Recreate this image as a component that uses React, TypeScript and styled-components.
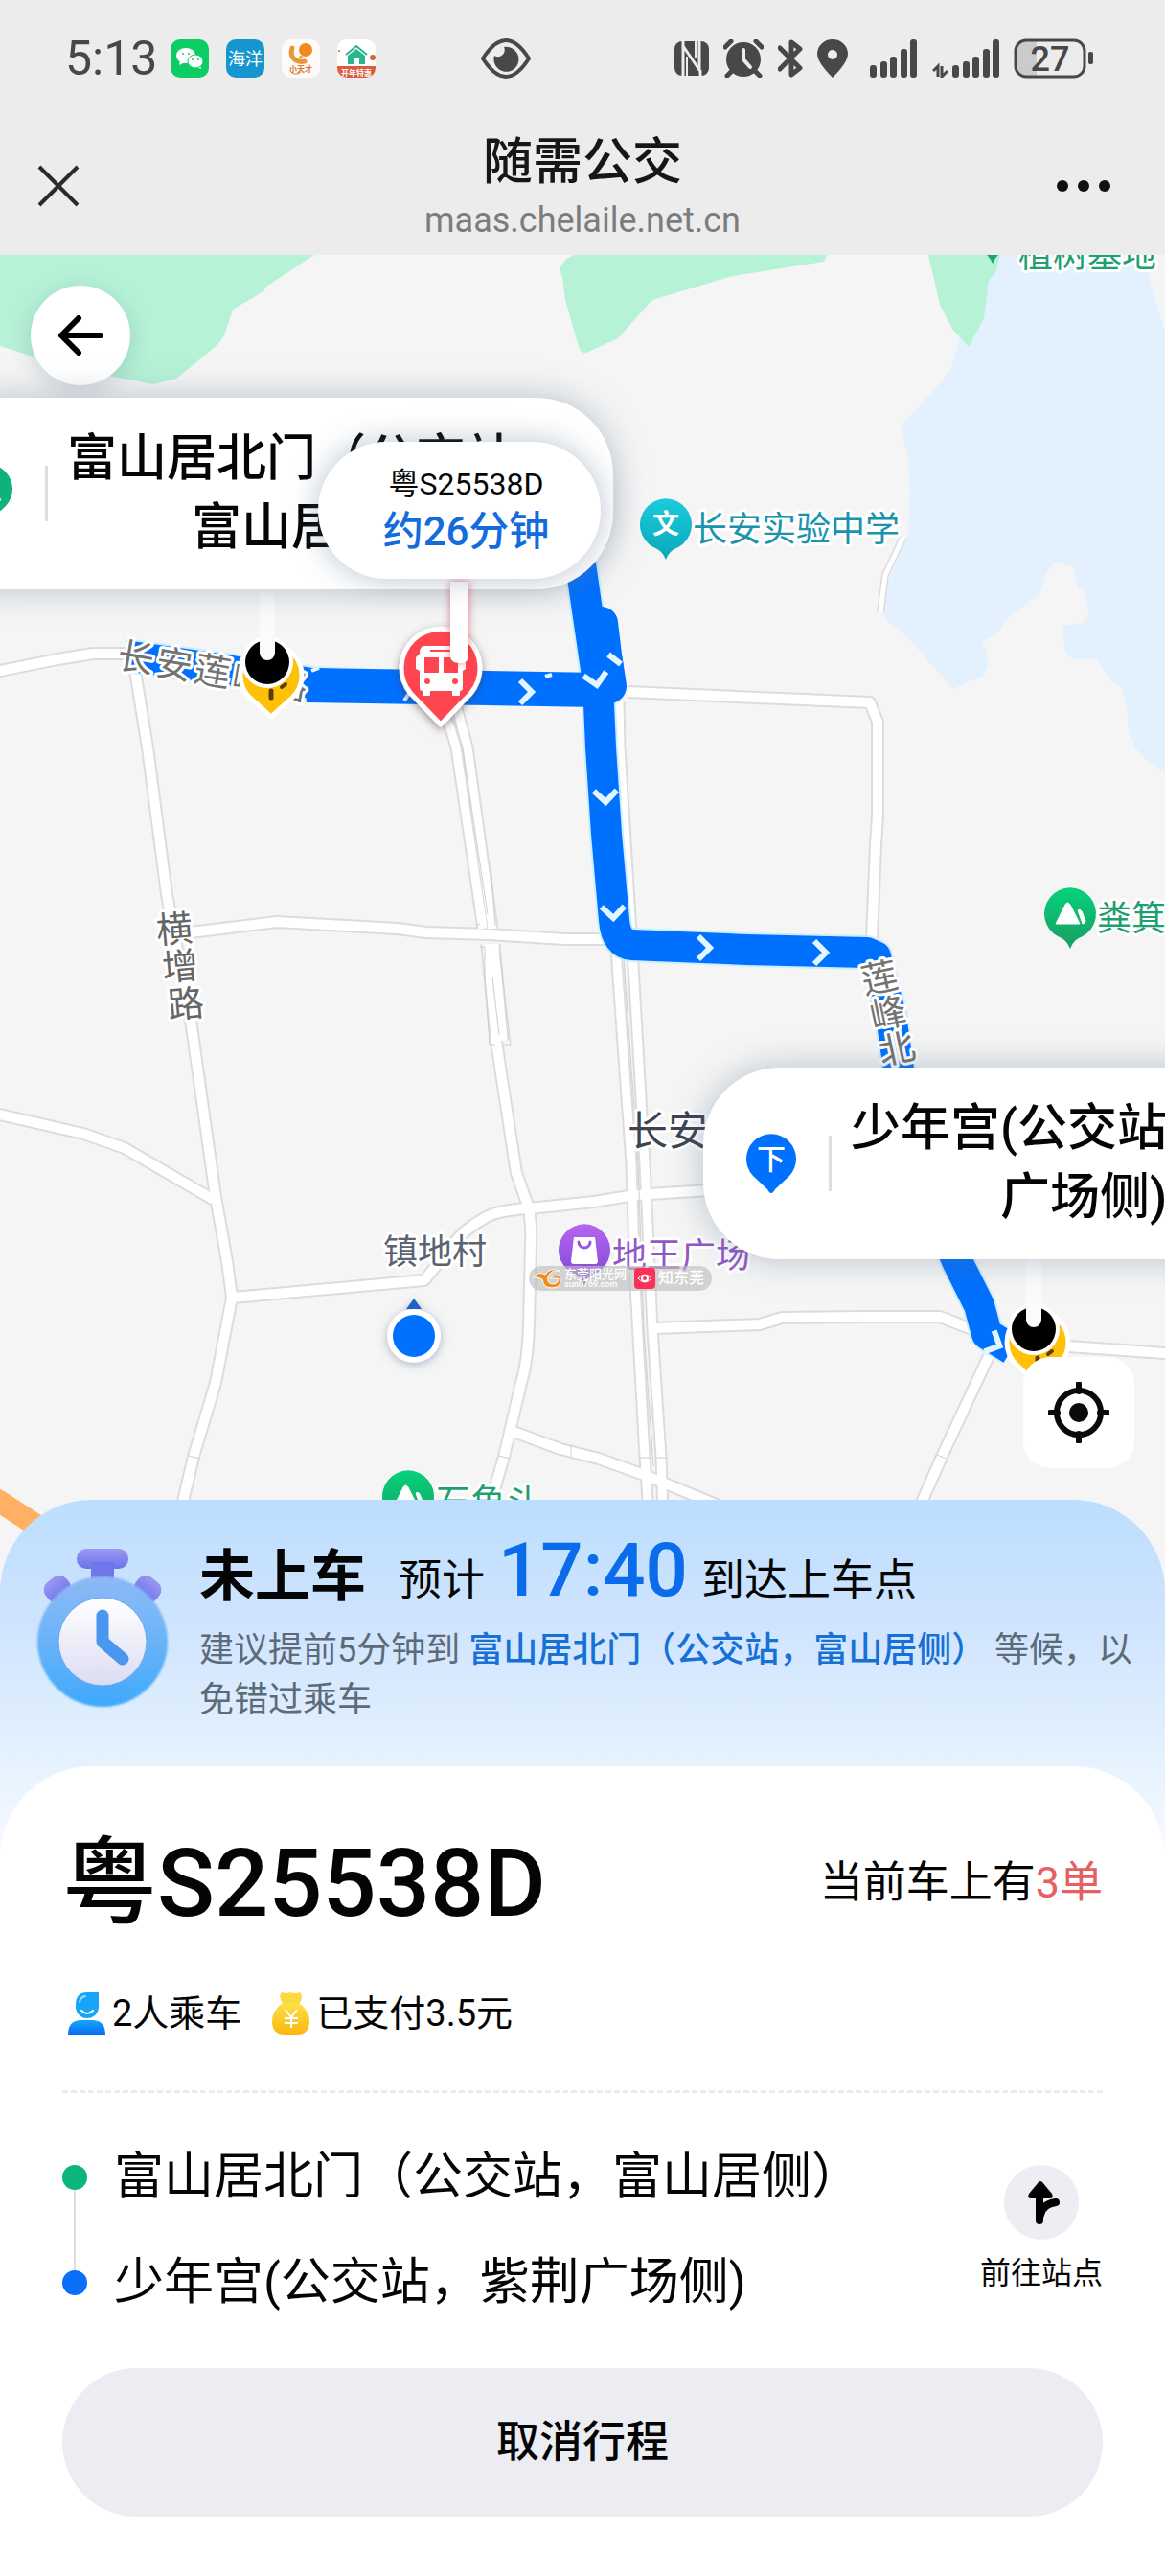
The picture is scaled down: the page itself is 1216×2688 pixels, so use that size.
import React from "react";
import styled, { createGlobalStyle } from "styled-components";

const GlobalStyle = createGlobalStyle`
  * { box-sizing: border-box; }
  body {
    margin: 0;
    background: #fff;
    color: #050505;
    font-family: Roboto, "Noto Sans CJK SC", sans-serif;
  }
  button { font: inherit; color: inherit; border: 0; padding: 0; cursor: pointer; }
  h1, h2, p, ol { margin: 0; padding: 0; font-weight: 400; }
`;

const Page = styled.main`
  display: flex;
  flex-direction: column;
  min-height: 100vh;
  overflow: hidden;
`;

/* ---------- top bars ---------- */

const Header = styled.header`
  background: #ececec;
  height: 266px;
`;

const StatusBar = styled.div`
  display: flex;
  align-items: center;
  gap: 110px;
  height: 122px;
  padding: 0 74px 0 68px;
  color: #484848;
`;

const StatusGroup = styled.div<{ $gap: number; $end?: boolean }>`
  display: flex;
  align-items: center;
  flex: none;
  gap: ${(p) => p.$gap}px;
  margin-left: ${(p) => (p.$end ? "auto" : "0")};
`;

const SignalGroup = styled.div`
  display: flex;
  align-items: center;
  gap: 16px;
  padding-left: 8px;
`;

const Clock = styled.span`
  width: 92px;
  font-size: 50px;
  line-height: 60px;
`;

const AppIcon = styled.svg`
  width: 40px;
  height: 40px;
  flex: none;
`;

const Glyph = styled.svg`
  display: block;
  flex: none;
`;

const TitleBar = styled.div`
  display: grid;
  grid-template-columns: 170px 1fr 170px;
  align-items: center;
  height: 144px;
`;

const BarButton = styled.button<{ $width: number }>`
  display: grid;
  place-items: center;
  width: ${(p) => p.$width}px;
  height: 100px;
  background: none;
`;

const TitleText = styled.div`
  padding-top: 8px;
  text-align: center;
`;

const Title = styled.h1`
  font-size: 52px;
  line-height: 64px;
  font-weight: 500;
  color: #161616;
`;

const Host = styled.p`
  font-size: 36px;
  line-height: 56px;
  color: #7c7c7c;
`;

/* ---------- map ---------- */

const MapArea = styled.section`
  position: relative;
  overflow: hidden;
  height: 1400px;
  background: #f5f5f5;
`;

const MapCanvas = styled.svg`
  display: block;
  width: 100%;
  height: 100%;
`;

const BackButton = styled.button`
  position: absolute;
  left: 32px;
  top: 32px;
  width: 104px;
  height: 104px;
  display: grid;
  place-items: center;
  border-radius: 50%;
  background: #fff;
  box-shadow: 0 6px 24px rgba(60, 90, 120, 0.22);
`;

const LocateButton = styled.button`
  position: absolute;
  right: 32px;
  top: 1150px;
  width: 116px;
  height: 116px;
  display: grid;
  place-items: center;
  border-radius: 28px;
  background: #fff;
`;

const Callout = styled.div<{ $left: number; $top: number }>`
  position: absolute;
  left: ${(p) => p.$left}px;
  top: ${(p) => p.$top}px;
  display: flex;
  align-items: center;
  padding: 28px 50px 28px 45px;
  border-radius: 80px;
  background: #fff;
  box-shadow: 0 0 36px rgba(90, 115, 140, 0.4);
  white-space: nowrap;
`;

const CalloutRule = styled.span`
  width: 3px;
  height: 58px;
  margin: 0 20px 0 34px;
  background: #ddd;
`;

const CalloutText = styled.p`
  font-size: 52px;
  line-height: 72px;
  font-weight: 500;
  text-align: center;
`;

const Vehicle = styled.div`
  position: absolute;
  left: 332px;
  top: 195px;
  width: 295px;
`;

const VehicleBubble = styled.div`
  position: relative;
  display: flex;
  flex-direction: column;
  justify-content: center;
  align-items: center;
  height: 143px;
  padding-left: 14px;
  border-radius: 72px;
  background: #fff;
  box-shadow: 0 0 32px rgba(90, 115, 140, 0.42);
`;

const VehiclePlate = styled.span`
  font-size: 32px;
  line-height: 44px;
`;

const VehicleEta = styled.span`
  font-size: 42px;
  line-height: 56px;
  font-weight: 500;
  color: #146bdb;
`;

const Watermark = styled.div`
  position: absolute;
  left: 552px;
  top: 1055px;
  display: flex;
  align-items: center;
  gap: 3px;
  height: 26px;
  padding: 0 8px 0 4px;
  border-radius: 13px;
  background: rgba(190, 190, 190, 0.65);
  color: #fff;
`;

const WatermarkText = styled.span<{ $size: number }>`
  font-size: ${(p) => p.$size}px;
  line-height: ${(p) => p.$size}px;
  font-weight: 500;
`;

const WatermarkStack = styled.span`
  display: flex;
  flex-direction: column;
  width: 70px;
`;

/* ---------- bottom sheet ---------- */

const Sheet = styled.section`
  position: relative;
  flex: 1;
  display: flex;
  flex-direction: column;
  margin-top: -101px;
  border-radius: 96px 96px 0 0;
  background: linear-gradient(#bcdefe 0px, #cfe4fe 130px, #e3f1fe 260px, #f2f8ff 340px, #fff 400px);
`;

const StatusRow = styled.div`
  display: flex;
  align-items: flex-start;
  gap: 24px;
  height: 278px;
  padding: 32px 24px 0 32px;
`;

const StatusBody = styled.div`
  flex: 1;
`;

const Headline = styled.h2`
  display: flex;
  align-items: baseline;
  font-size: 45px;
  line-height: 84px;
`;

const State = styled.strong`
  margin-right: 34px;
  font-size: 58px;
  font-weight: 700;
`;

const ArriveTime = styled.span`
  margin: 0 14px;
  font-size: 78px;
  font-weight: 500;
  color: #0a6cea;
`;

const Advice = styled.p`
  margin-top: 4px;
  font-size: 36px;
  line-height: 52px;
  color: #5d6a78;

  em {
    font-style: normal;
    font-weight: 500;
    color: #1670d6;
  }
`;

const Card = styled.div`
  flex: 1;
  display: flex;
  flex-direction: column;
  padding: 54px 65px 64px;
  border-radius: 96px 96px 0 0;
  background: #fff;
`;

const PlateRow = styled.div`
  display: flex;
  align-items: center;
  justify-content: space-between;
  height: 136px;
`;

const Plate = styled.h2`
  font-size: 99px;
  line-height: 136px;
  font-weight: 500;
`;

const Orders = styled.p`
  font-size: 45px;
  line-height: 64px;
`;

const OrderCount = styled.span`
  color: #e5605f;
`;

const Facts = styled.div`
  display: flex;
  gap: 30px;
  height: 148px;
  padding: 40px 0 0 4px;
`;

const Fact = styled.span`
  display: flex;
  align-items: center;
  gap: 4px;
  height: 56px;
  font-size: 38px;
  line-height: 56px;
`;

const Trip = styled.div`
  display: flex;
  justify-content: space-between;
  padding: 33px 0 34px;
  border-top: 3px dashed #ebebeb;
`;

const Stops = styled.ol`
  list-style: none;
`;

const Stop = styled.li<{ $color: string; $linked?: boolean }>`
  position: relative;
  display: flex;
  align-items: center;
  gap: 28px;
  height: 110px;
  font-size: 52px;
  line-height: 72px;

  &::before {
    content: "";
    width: 26px;
    height: 26px;
    border-radius: 50%;
    background: ${(p) => p.$color};
  }

  &::after {
    content: "";
    display: ${(p) => (p.$linked ? "block" : "none")};
    position: absolute;
    left: 12px;
    top: 68px;
    width: 2px;
    height: 84px;
    background: #ddd;
  }
`;

const NavButton = styled.button`
  display: flex;
  flex-direction: column;
  align-items: center;
  gap: 13px;
  padding-top: 42px;
  align-self: flex-start;
  background: none;
  font-size: 32px;
  line-height: 44px;
`;

const NavDisc = styled.span`
  display: grid;
  place-items: center;
  width: 78px;
  height: 78px;
  border-radius: 50%;
  background: #eceef3;
`;

const CancelButton = styled.button`
  height: 155px;
  margin-top: auto;
  border-radius: 78px;
  background: #ebedf3;
  font-size: 45px;
  line-height: 64px;
  font-weight: 500;
`;

/* ---------- drawings ---------- */

const ROADS = [
  "M-10 702L0 700 60 688 97 682 135 682",
  "M141 700L154 780 166 872 174 933 200 1071 225 1249 237 1316 242 1354 225 1443 202 1520 176 1630",
  "M190 974L289 962 415 969 445 973 510 975 590 980 640 980",
  "M-10 1162L0 1163 87 1183 130 1198 223 1252",
  "M242 1354L443 1336 459 1316Q480 1288 488 1283 500 1273 514 1267 530 1262 552 1261L620 1254 663 1247 740 1242",
  "M518 1086L523 1120 539 1224 552 1261Q555 1280 554 1300L552 1382Q551 1420 544 1443L526 1520 500 1610",
  "M536 1494L585 1512 625 1522 675 1540 760 1575",
  "M655 722L908 733 916 753 916 850 914 882 910 979",
  "M684 1386L793 1382 816 1375 899 1374 981 1374 1017 1388 1050 1400 1115 1405 1216 1412 1230 1412",
  "M1032 1415L983 1520 930 1640",
];

const DUAL_ROADS = [
  "M458 735L470 760 476 780 504 969",
  "M476 735L488 780 514 969",
  "M508 985L512 1030 518 1090",
  "M516 985L525 1086",
  "M643 990L650 1090 659 1214 663 1341 673 1520 677 1580",
  "M646 733L647 780 659 974 673 1214 681 1387 690 1520 692 1580",
];

const ROUTES = [
  "M130 684L230 698 325 713 420 717 625 720",
  "M604 575L613 637 624 712 627 780 633 870 641 960Q643 985 660 986L780 991 905 994 914 998 930 1060 950 1200 999 1316 1022 1362 1030 1392 1056 1408",
];

type LabelProps = {
  x: number;
  y: number;
  color: string;
  size?: number;
  rotate?: number;
  anchor?: "start" | "middle";
  children: string;
};

const MapLabel = ({ x, y, color, size = 36, rotate = 0, anchor = "start", children }: LabelProps) => (
  <text
    x={x}
    y={y}
    dy="0.37em"
    fontSize={size}
    fill={color}
    stroke="#fff"
    strokeWidth={6}
    strokeLinejoin="round"
    paintOrder="stroke"
    textAnchor={anchor}
    transform={rotate ? `rotate(${rotate} ${x} ${y})` : undefined}
  >
    {children}
  </text>
);

const PoiPin = ({ x, y, fill, children }: { x: number; y: number; fill: string; children?: React.ReactNode }) => (
  <g transform={`translate(${x} ${y})`}>
    <path d="M0 37C-4 28-7 27-13 24A27 27 0 1 1 13 24C7 27 4 28 0 37Z" fill={fill} />
    {children}
  </g>
);

const Mountain = () => (
  <path
    d="M-15 11L-5-9Q-3-13 0-9L10 11ZM8-3Q10-5 12-2L16 8Q16 11 13 11Z"
    fill="#fff"
    stroke="#fff"
    strokeWidth={1}
    strokeLinejoin="round"
  />
);

const Chevron = ({ x, y, turn = 0 }: { x: number; y: number; turn?: number }) => (
  <path
    d="M-6-12L6 0-6 12"
    fill="none"
    stroke="#e2f6ff"
    strokeWidth={6}
    transform={`translate(${x} ${y}) rotate(${turn})`}
  />
);

const StopMarker = ({ x, y, top }: { x: number; y: number; top: number }) => (
  <g>
    <path
      d={`M${x + 4} ${y + 57}L${x - 18} ${y + 37}A32 32 0 1 1 ${x + 26} ${y + 37}Z`}
      fill="#ffc107"
      stroke="#fff"
      strokeWidth={5}
      strokeLinejoin="round"
    />
    <path d={`M${x + 4} ${y + 30}v7`} stroke="#5a3d12" strokeWidth={5} strokeLinecap="round" />
    <path d={`M${x + 15} ${y + 26}l4-3`} stroke="#5a3d12" strokeWidth={4} strokeLinecap="round" />
    <circle cx={x} cy={y} r={27} fill="#fff" />
    <circle cx={x} cy={y} r={23} fill="#000" />
    <path d={`M${x - 8} ${top}h16V${y - 10}a8 8 0 0 1-16 0Z`} fill="#fbfbfc" />
  </g>
);

const CityMap = () => (
  <MapCanvas viewBox="0 266 1216 1400" preserveAspectRatio="xMidYMin slice" role="img" aria-label="地图">
    <defs>
      <linearGradient id="teal" x2="0" y2="1">
        <stop offset="0" stopColor="#1ccbdc" />
        <stop offset="1" stopColor="#08a9b9" />
      </linearGradient>
      <linearGradient id="green" x2="0" y2="1">
        <stop offset="0" stopColor="#05d27b" />
        <stop offset="1" stopColor="#1a9c62" />
      </linearGradient>
      <linearGradient id="purple" x2="0" y2="1">
        <stop offset="0" stopColor="#b565f0" />
        <stop offset="1" stopColor="#7b45d8" />
      </linearGradient>
      <filter id="soft" x="-50%" y="-50%" width="200%" height="200%">
        <feDropShadow dx="0" dy="2" stdDeviation="5" floodColor="#5a7390" floodOpacity="0.5" />
      </filter>
    </defs>
    <rect y="266" width="1216" height="1400" fill="#f5f5f5" />
    <g fill="#b6f2d6">
      <path d="M0 266H328L278 299 275 304 243 323 234 350 227 360 184 395 160 401 118 393 34 372 0 361Z" />
      <path d="M600 266L591 270 584 280 587 290 590 313 604 362Q606 369 612 368L645 353 679 315 684 312 765 288 860 273 863 266Z" />
    </g>
    <path
      fill="#e3f1fe"
      d="M1030 266H1197L1199 288 1216 348V806L1193 790 1185 780 1178 763 1176 737 1170 716 1162 712 1144 688H1123Q1114 686 1112 680L1108 653 1130 650 1137 642 1132 617 1125 613 1121 592 1100 586 1093 597 1085 620 1050 646 1040 662 1025 669 1030 680 1032 692 1026 705 995 719 969 690 948 665 925 647 922 637 926 610 948 557 950 513 948 480 942 452 941 443 977 405 993 383 1001 355 1005 330Z"
    />
    <path fill="#b6f2d6" d="M969 266L981 318 994 343 1011 362 1027 332 1032 293 1039 285 1044 266Z" />

    <g fill="none" strokeLinejoin="round">
      <g stroke="#dcdcde">
        {ROADS.map((d) => <path key={d} d={d} strokeWidth={14} />)}
        {DUAL_ROADS.map((d) => <path key={d} d={d} strokeWidth={13} />)}
        <path d="M943 560L924 600 919 639" strokeWidth={8} />
      </g>
      <g stroke="#fff">
        {ROADS.map((d) => <path key={d} d={d} strokeWidth={10} />)}
        {DUAL_ROADS.map((d) => <path key={d} d={d} strokeWidth={9} />)}
        <path d="M943 560L924 600 919 639" strokeWidth={5} />
      </g>
      <g stroke="#cfcfd2" strokeWidth={1}>
        <path d="M482 775L509 954M514 1020L521 1080M651 1000L666 1214 672 1387 682 1530M512 900l5 66M497 966l4-2M501 988l5 0 0 30 5 72h6M525 1090h8l-12-98" />
        <path d="M197 1519l11 3M521 1519l11 3M668 1521h11M684 1521h12M978 1518l10 4M596 1508v12" />
      </g>
      <path d="M-12 1560L0 1567 60 1606" stroke="#ffb062" strokeWidth={23} />
      <g stroke="#cdeeff">
        {ROUTES.map((d) => <path key={d} d={d} strokeWidth={36} />)}
      </g>
      <g stroke="#0070ff">
        {ROUTES.map((d) => <path key={d} d={d} strokeWidth={32} />)}
        <path d="M628 650L634 700" strokeWidth={34} strokeLinecap="round" />
        <path d="M632 690L636 716" strokeWidth={36} strokeLinecap="round" />
        <path d="M320 715L625 720" strokeWidth={36} />
      </g>
    </g>
    <Chevron x={549} y={722} />
    <Chevron x={735} y={989} />
    <Chevron x={856} y={994} />
    <Chevron x={622} y={709} turn={80} />
    <Chevron x={632} y={831} turn={88} />
    <Chevron x={640} y={952} turn={88} />
    <Chevron x={1038} y={1402} turn={25} />
    <path d="M635 683l13 10" stroke="#e2f6ff" strokeWidth={6} />
    <path d="M325 700l8-3M569 706l7-2M422 731l6-9" stroke="#e2f6ff" strokeWidth={4} />

    <g>
      {["长", "安", "莲", "峰", "路"].map((c, i) => (
        <MapLabel key={c} x={142 + i * 40} y={686 + i * 7} color="#737373" size={38} rotate={10} anchor="middle">
          {c}
        </MapLabel>
      ))}
      {["横", "增", "路"].map((c, i) => (
        <MapLabel key={c} x={182 + i * 6} y={969 + i * 39} color="#666" size={38} rotate={-5} anchor="middle">
          {c}
        </MapLabel>
      ))}
      {["莲", "峰", "北"].map((c, i) => (
        <MapLabel key={c} x={918 + i * 9} y={1020 + i * 37} color="#737373" size={38} rotate={-12} anchor="middle">
          {c}
        </MapLabel>
      ))}
      <MapLabel x={655} y={1179} color="#3d4350" size={42}>长安镇</MapLabel>
      <MapLabel x={400} y={1306} color="#5b6372">镇地村</MapLabel>
    </g>

    <PoiPin x={695} y={547} fill="url(#teal)">
      <text y={10} fontSize={28} fontWeight={700} fill="#fff" textAnchor="middle">文</text>
    </PoiPin>
    <MapLabel x={723} y={552} color="#1b93ac">长安实验中学</MapLabel>
    <PoiPin x={1117} y={953} fill="url(#green)"><Mountain /></PoiPin>
    <MapLabel x={1145} y={958} color="#1f9f72">粪箕笃</MapLabel>
    <PoiPin x={1036} y={238} fill="#1fa372" />
    <MapLabel x={1063} y={266} color="#1f9f72">植树基地</MapLabel>
    <PoiPin x={426} y={1561} fill="url(#green)"><Mountain /></PoiPin>
    <MapLabel x={455} y={1567} color="#1f9f72">石角斗</MapLabel>
    <PoiPin x={610} y={1304} fill="url(#purple)">
      <path d="M-11-13H11L14 12Q14 15 11 15H-11Q-14 15-14 12Z" fill="#fff" />
      <path d="M-6-8a6 6 0 0 0 12 0" fill="none" stroke="#9a55e6" strokeWidth={3} strokeLinecap="round" />
    </PoiPin>
    <MapLabel x={639} y={1310} color="#8f58c4">地王广场</MapLabel>

    <g filter="url(#soft)">
      <path d="M424 1366L432 1355 440 1366Z" fill="#1d63c8" />
      <circle cx="432" cy="1394" r="28" fill="#fff" />
    </g>
    <circle cx="432" cy="1394" r="22" fill="#0070ff" />

    <StopMarker x={279} y={691} top={619} />
    <StopMarker x={1079} y={1387} top={1315} />
  </MapCanvas>
);

const LetterPin = ({ color, children }: { color: string; children: string }) => (
  <Glyph width={52} height={62} viewBox="0 0 52 62">
    <path d="M26 62Q24 62 22 58L7 44A26 26 0 1 1 45 44L30 58Q28 62 26 62Z" fill={color} />
    <text x={26} y={37} fontSize={30} fontWeight={500} fill="#fff" textAnchor="middle">
      {children}
    </text>
  </Glyph>
);

const BusPin = () => (
  <Glyph width={295} height={166} viewBox="332 604 295 166">
    <defs>
      <filter id="busShadow" x="-50%" y="-50%" width="200%" height="200%">
        <feDropShadow dx="0" dy="3" stdDeviation="4" floodColor="#4a3a3a" floodOpacity="0.55" />
      </filter>
      <filter id="stemShadow" x="-100%" y="-20%" width="300%" height="140%">
        <feDropShadow dx="0" dy="0" stdDeviation="4" floodColor="#d03040" floodOpacity="0.6" />
      </filter>
    </defs>
    <path
      d="M460 756L429 724A41 41 0 1 1 491 724Z"
      fill="#ff454f"
      stroke="#fff"
      strokeWidth={5}
      strokeLinejoin="round"
      filter="url(#busShadow)"
    />
    <path
      fill="#fff"
      d="M443 674H477Q483 674 483 681L486 684V698L483 700V718Q483 721 480 721V726H472V721H449V726H441V721Q438 721 438 718V700L434 698V686L438 682Q438 674 443 674Z"
    />
    <path fill="#ff454f" d="M449 680h23v-2h-23zM443 686h15v16h-15zM463 686h15v16h-15z" />
    <circle cx="446" cy="711" r="3" fill="#ff454f" />
    <circle cx="475" cy="711" r="3" fill="#ff454f" />
    <path d="M470 607H489V684Q489 692 480 692 470 692 470 684Z" fill="#fff" filter="url(#stemShadow)" />
  </Glyph>
);

const Stopwatch = () => (
  <Glyph width={152} height={200} viewBox="32 1597 152 200" aria-hidden="true">
    <defs>
      <linearGradient id="ring" x2="0" y2="1">
        <stop offset="0" stopColor="#8fb8f6" />
        <stop offset="0.35" stopColor="#76b6f8" />
        <stop offset="1" stopColor="#3fa9fb" />
      </linearGradient>
      <linearGradient id="knob" x2="0" y2="1">
        <stop offset="0" stopColor="#9c97f3" />
        <stop offset="1" stopColor="#6a74ea" />
      </linearGradient>
      <linearGradient id="face" x2="0" y2="1">
        <stop offset="0" stopColor="#fff" />
        <stop offset="1" stopColor="#dcdcf3" />
      </linearGradient>
      <filter id="ringBlur"><feGaussianBlur stdDeviation="1" /></filter>
    </defs>
    <rect x="80" y="1616" width="54" height="21" rx="10" fill="url(#knob)" />
    <rect x="95" y="1630" width="24" height="20" fill="#6f76ea" />
    <rect x="46" y="1646" width="28" height="24" rx="10" fill="url(#knob)" transform="rotate(-38 60 1658)" />
    <rect x="140" y="1646" width="28" height="24" rx="10" fill="url(#knob)" transform="rotate(38 154 1658)" />
    <circle cx="107" cy="1713" r="68" fill="url(#ring)" filter="url(#ringBlur)" />
    <circle cx="107" cy="1713" r="46" fill="url(#face)" stroke="#6aa5ee" strokeWidth="1" />
    <path d="M107 1686V1713L128 1731" fill="none" stroke="#4a97f0" strokeWidth="13" strokeLinecap="round" strokeLinejoin="round" />
  </Glyph>
);

const PersonIcon = () => (
  <Glyph width={44} height={46} viewBox="0 0 44 46">
    <defs>
      <linearGradient id="person" x2="0" y2="1">
        <stop offset="0" stopColor="#12a8fb" />
        <stop offset="1" stopColor="#0a6cf5" />
      </linearGradient>
    </defs>
    <path d="M10 14Q10 1 22 1H34V16A12 12 0 0 1 10 16Z" fill="#16a5f8" />
    <path d="M16 20Q22 26 28 20" fill="none" stroke="#fff" strokeWidth="2" strokeLinecap="round" />
    <path d="M14 11Q15 6 20 5" fill="none" stroke="#9bdcff" strokeWidth="2" strokeLinecap="round" />
    <path d="M2 45Q2 30 16 30H27Q41 30 41 45Z" fill="url(#person)" />
  </Glyph>
);

const MoneyIcon = () => (
  <Glyph width={44} height={46} viewBox="0 0 44 46">
    <defs>
      <linearGradient id="money" x2="0" y2="1">
        <stop offset="0" stopColor="#fde04a" />
        <stop offset="1" stopColor="#fbb70d" />
      </linearGradient>
    </defs>
    <path d="M12 1Q17 3 21 1 26 3 31 1 35 6 31 12H13Q8 6 12 1Z" fill="#fcd93f" />
    <path d="M13 12H30Q41 20 41 31 41 45 28 45H15Q2 45 2 31 2 20 13 12Z" fill="url(#money)" />
    <path d="M16 19l6 8 6-8M22 27v11M15 28h14M15 33h14" fill="none" stroke="#fff" strokeWidth="2" />
  </Glyph>
);

const SIGNAL = [
  [0, 27],
  [11, 23],
  [21, 18],
  [32, 10],
  [42, 0],
];

const Signal = () => (
  <Glyph width={49} height={40} viewBox="0 0 49 40">
    {SIGNAL.map(([x, y]) => (
      <rect key={x} x={x} y={y} width="7" height={40 - y} rx="3" fill="#484848" />
    ))}
  </Glyph>
);

const StatusIcons = () => (
  <>
    <Glyph width={36} height={36} viewBox="0 0 36 36">
      <rect width="36" height="36" rx="8" fill="#484848" />
      <path d="M9 36V5L26 30V0M9 5V0M27 36V30" stroke="#ececec" strokeWidth="3" fill="none" />
      <path d="M13 16V36M22 0V17" stroke="#ececec" strokeWidth="2" />
    </Glyph>
    <Glyph width={42} height={40} viewBox="0 0 42 40">
      <circle cx="21" cy="21" r="18" fill="#484848" />
      <path d="M2 8L8 2M40 8L34 2M9 33l-5 5M33 33l5 5" stroke="#484848" strokeWidth="5" strokeLinecap="round" />
      <path d="M21 11V21L28 29" stroke="#ececec" strokeWidth="4" fill="none" strokeLinecap="round" />
    </Glyph>
    <Glyph width={26} height={40} viewBox="0 0 26 40">
      <path d="M2 9L23 30 14 37V3L23 10 2 31" fill="none" stroke="#484848" strokeWidth="5" strokeLinejoin="round" strokeLinecap="round" />
    </Glyph>
    <Glyph width={32} height={40} viewBox="0 0 32 40">
      <path fillRule="evenodd" d="M16 40Q0 24 0 15A16 15 0 0 1 32 15Q32 24 16 40ZM16 11a5 5 0 1 0 0 10 5 5 0 0 0 0-10Z" fill="#484848" />
    </Glyph>
  </>
);

const Battery = () => (
  <Glyph width={84} height={42} viewBox="0 0 84 42">
    <path d="M12 3H24V39H12Q3 39 3 30V12Q3 3 12 3Z" fill="#cbcbcb" />
    <rect x="2" y="2" width="72" height="38" rx="11" fill="none" stroke="#484848" strokeWidth="3" />
    <rect x="78" y="14" width="5" height="13" rx="2" fill="#484848" />
    <text x="38" y="34" fontSize="36" fontWeight="500" fill="#484848" textAnchor="middle">27</text>
  </Glyph>
);

const AppIcons = () => (
  <>
    <AppIcon viewBox="0 0 40 40">
      <rect width="40" height="40" rx="10" fill="#0ccd63" />
      <ellipse cx="16" cy="17" rx="10" ry="8" fill="#fff" />
      <path d="M10 22l-1 5 6-3zM31 27l1 4-5-2z" fill="#fff" />
      <ellipse cx="26" cy="23" rx="8" ry="7" fill="#fff" stroke="#0ccd63" strokeWidth="1" />
      <g fill="#0ccd63">
        <circle cx="13" cy="15" r="1" />
        <circle cx="19" cy="15" r="1" />
        <circle cx="23" cy="21" r="1" />
        <circle cx="29" cy="21" r="1" />
      </g>
    </AppIcon>
    <AppIcon viewBox="0 0 40 40">
      <rect width="40" height="40" rx="10" fill="#1596cf" />
      <text x="20" y="27" fontSize="18" fill="#fff" textAnchor="middle">海洋</text>
    </AppIcon>
    <AppIcon viewBox="0 0 40 40">
      <rect width="40" height="40" rx="10" fill="#fdfaf7" />
      <circle cx="25" cy="11" r="7" fill="#f08a1d" />
      <path d="M19 17l-1 3 5-2z" fill="#f08a1d" />
      <path d="M11 9C8 18 14 25 24 23" fill="none" stroke="#e8963a" strokeWidth="5" strokeLinecap="round" />
      <text x="20" y="34" fontSize="8" fontWeight="700" fill="#d9792b" textAnchor="middle">小天才</text>
      <path d="M9 33Q14 39 20 34" fill="none" stroke="#d9792b" strokeWidth="1" />
    </AppIcon>
    <AppIcon viewBox="0 0 40 40">
      <defs>
        <clipPath id="homeClip"><rect width="40" height="40" rx="10" /></clipPath>
      </defs>
      <g clipPath="url(#homeClip)">
        <rect width="40" height="40" fill="#fff" />
        <rect y="28" width="40" height="12" fill="#dd5b3c" />
        <path d="M9 16L20 7 31 16" fill="none" stroke="#2ab58c" strokeWidth="2" />
        <path d="M11 17L20 10 29 17V26H23V20H18V26H11Z" fill="#2ab58c" />
        <circle cx="37" cy="19" r="3" fill="#c96a3a" />
        <circle cx="2" cy="12" r="1" fill="#c96a3a" />
        <text x="20" y="38" fontSize="8" fontWeight="700" fill="#fff" textAnchor="middle">开年特惠</text>
      </g>
    </AppIcon>
  </>
);

export default function App() {
  return (
    <>
      <GlobalStyle />
      <Page>
        <Header>
          <StatusBar>
            <StatusGroup $gap={18}>
              <Clock>5:13</Clock>
              <AppIcons />
            </StatusGroup>
            <Glyph width={52} height={42} viewBox="0 0 52 42">
              <path d="M2 21Q26-17 50 21 26 59 2 21Z" fill="none" stroke="#484848" strokeWidth="4" strokeLinejoin="round" />
              <path d="M24 9A13 13 0 1 1 14 18 7 7 0 0 0 24 9Z" fill="#484848" />
            </Glyph>
            <StatusGroup $gap={15} $end>
              <StatusIcons />
              <SignalGroup>
                <Signal />
                <StatusGroup $gap={4}>
                  <Glyph width={17} height={40} viewBox="0 0 17 40">
                    <path d="M1 33L6 28V39M10 28V39L16 33" fill="none" stroke="#484848" strokeWidth="3" />
                  </Glyph>
                  <Signal />
                </StatusGroup>
              </SignalGroup>
              <Battery />
            </StatusGroup>
          </StatusBar>
          <TitleBar>
            <BarButton $width={122} aria-label="关闭">
              <Glyph width={44} height={44} viewBox="0 0 44 44">
                <path d="M2 2L42 42M42 2L2 42" stroke="#2a2a2a" strokeWidth="4" />
              </Glyph>
            </BarButton>
            <TitleText>
              <Title>随需公交</Title>
              <Host>maas.chelaile.net.cn</Host>
            </TitleText>
            <BarButton $width={170} aria-label="更多">
              <Glyph width={56} height={12} viewBox="0 0 56 12" fill="#111">
                <circle cx="6" cy="6" r="6" />
                <circle cx="28" cy="6" r="6" />
                <circle cx="50" cy="6" r="6" />
              </Glyph>
            </BarButton>
          </TitleBar>
        </Header>

        <MapArea>
          <CityMap />
          <BackButton aria-label="返回">
            <Glyph width={48} height={42} viewBox="0 0 48 42">
              <path d="M45 21H4M22 3L4 21 22 39" fill="none" stroke="#000" strokeWidth="6" strokeLinecap="round" strokeLinejoin="round" />
            </Glyph>
          </BackButton>
          <Callout $left={-84} $top={149}>
            <LetterPin color="#0fb27c">上</LetterPin>
            <CalloutRule />
            <CalloutText>
              富山居北门（公交站，
              <br />
              富山居侧）
            </CalloutText>
          </Callout>
          <Callout $left={734} $top={848}>
            <LetterPin color="#0070ff">下</LetterPin>
            <CalloutRule />
            <CalloutText>
              少年宫(公交站，紫荆
              <br />
              广场侧)
            </CalloutText>
          </Callout>
          <Vehicle>
            <VehicleBubble>
              <VehiclePlate>粤S25538D</VehiclePlate>
              <VehicleEta>约26分钟</VehicleEta>
            </VehicleBubble>
            <BusPin />
          </Vehicle>
          <Watermark>
            <Glyph width={30} height={24} viewBox="0 0 30 24">
              <path d="M0 11Q6 4 13 8 18 0 28 4 19 3 16 10 14 18 22 18 27 17 27 12H18Q21 9 28 9 32 22 20 22 11 22 10 13 5 10 0 11Z" fill="#f08c1a" stroke="#fff" strokeWidth="1" />
            </Glyph>
            <WatermarkStack>
              <WatermarkText $size={13}>东莞阳光网</WatermarkText>
              <WatermarkText $size={9}>sun0769.com</WatermarkText>
            </WatermarkStack>
            <Glyph width={22} height={22} viewBox="0 0 22 22">
              <rect width="22" height="22" rx="4" fill="#fb3158" />
              <path d="M4 11Q11 3 18 11 11 19 4 11Z" fill="none" stroke="#fff" strokeWidth="1" />
              <circle cx="11" cy="11" r="3" fill="none" stroke="#fff" strokeWidth="2" />
            </Glyph>
            <WatermarkText $size={16}>知东莞</WatermarkText>
          </Watermark>
          <LocateButton aria-label="定位">
            <Glyph width={64} height={64} viewBox="0 0 64 64">
              <circle cx="32" cy="32" r="23" fill="none" stroke="#0a0a0a" strokeWidth="6" />
              <circle cx="32" cy="32" r="10" fill="#0a0a0a" />
              <path d="M32 2v8M32 54v8M2 32h8M54 32h8" stroke="#0a0a0a" strokeWidth="6" strokeLinecap="round" />
            </Glyph>
          </LocateButton>
        </MapArea>

        <Sheet>
          <StatusRow>
            <Stopwatch />
            <StatusBody>
              <Headline>
                <State>未上车</State>
                预计
                <ArriveTime>17:40</ArriveTime>
                到达上车点
              </Headline>
              <Advice>
                建议提前5分钟到 <em>富山居北门（公交站，富山居侧）</em> 等候，以免错过乘车
              </Advice>
            </StatusBody>
          </StatusRow>
          <Card>
            <PlateRow>
              <Plate>粤S25538D</Plate>
              <Orders>
                当前车上有<OrderCount>3单</OrderCount>
              </Orders>
            </PlateRow>
            <Facts>
              <Fact>
                <PersonIcon />
                2人乘车
              </Fact>
              <Fact>
                <MoneyIcon />
                已支付3.5元
              </Fact>
            </Facts>
            <Trip>
              <Stops>
                <Stop $color="#0bb57d" $linked>富山居北门（公交站，富山居侧）</Stop>
                <Stop $color="#0a6ff8">少年宫(公交站，紫荆广场侧)</Stop>
              </Stops>
              <NavButton>
                <NavDisc>
                  <Glyph width={40} height={46} viewBox="0 0 40 46">
                    <path d="M17 2Q19 0 21 2L31 14Q33 19 29 19H9Q5 19 7 14Z" fill="#000" />
                    <path d="M18 16V42M19 36Q21 25 35 23" fill="none" stroke="#000" strokeWidth="8" strokeLinecap="round" />
                  </Glyph>
                </NavDisc>
                前往站点
              </NavButton>
            </Trip>
            <CancelButton>取消行程</CancelButton>
          </Card>
        </Sheet>
      </Page>
    </>
  );
}
